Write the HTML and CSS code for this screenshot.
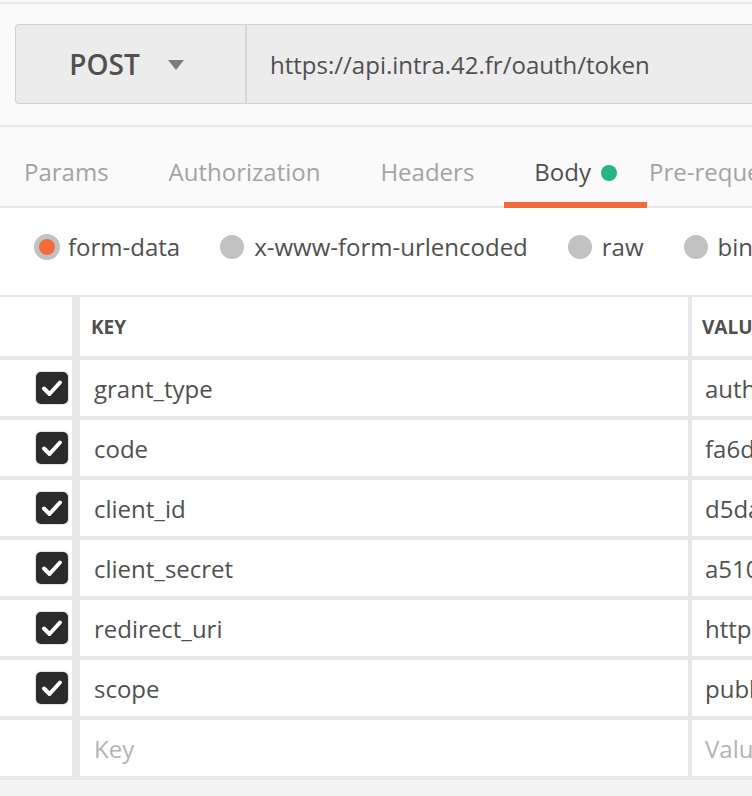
FILE: index.html
```html
<html>
<head>
    <title>Body - form-data</title>
    <link rel="stylesheet" href="styles.css">
</head>
<body>
    <div class="request">
        <div class="request-bar">
            <div class="method">
                <span>POST</span>
                <svg class="caret" width="16" height="10" viewBox="0 0 16 10"><path d="M0 0 H16 L8 10 Z" fill="#7d7d7d"/></svg>
            </div>
            <div class="url">https://api.intra.42.fr/oauth/token</div>
        </div>
    </div>

    <div class="tabs">
        <div class="tab first">Params</div>
        <div class="tab">Authorization</div>
        <div class="tab">Headers</div>
        <div class="tab active">Body <span class="dot"></span></div>
        <div class="tab last">Pre-request Script</div>
    </div>

    <div class="body-types">
        <label class="radio checked"><span class="circle"></span>form-data</label>
        <label class="radio"><span class="circle"></span>x-www-form-urlencoded</label>
        <label class="radio"><span class="circle"></span>raw</label>
        <label class="radio"><span class="circle"></span>binary</label>
    </div>

    <div class="table">
        <div class="row head">
            <div class="cell check"></div>
            <div class="cell key">KEY</div>
            <div class="cell value">VALUE</div>
        </div>
        <div class="row">
            <div class="cell check"><span class="box"><svg width="28" height="28" viewBox="0 0 28 28"><path d="M6 14.5 L11.5 20 L22 8.5" fill="none" stroke="#fff" stroke-width="4" stroke-linecap="round" stroke-linejoin="round"/></svg></span></div>
            <div class="cell key">grant_type</div>
            <div class="cell value">authorization_code</div>
        </div>
        <div class="row">
            <div class="cell check"><span class="box"><svg width="28" height="28" viewBox="0 0 28 28"><path d="M6 14.5 L11.5 20 L22 8.5" fill="none" stroke="#fff" stroke-width="4" stroke-linecap="round" stroke-linejoin="round"/></svg></span></div>
            <div class="cell key">code</div>
            <div class="cell value">fa6d</div>
        </div>
        <div class="row">
            <div class="cell check"><span class="box"><svg width="28" height="28" viewBox="0 0 28 28"><path d="M6 14.5 L11.5 20 L22 8.5" fill="none" stroke="#fff" stroke-width="4" stroke-linecap="round" stroke-linejoin="round"/></svg></span></div>
            <div class="cell key">client_id</div>
            <div class="cell value">d5da</div>
        </div>
        <div class="row">
            <div class="cell check"><span class="box"><svg width="28" height="28" viewBox="0 0 28 28"><path d="M6 14.5 L11.5 20 L22 8.5" fill="none" stroke="#fff" stroke-width="4" stroke-linecap="round" stroke-linejoin="round"/></svg></span></div>
            <div class="cell key">client_secret</div>
            <div class="cell value">a510</div>
        </div>
        <div class="row">
            <div class="cell check"><span class="box"><svg width="28" height="28" viewBox="0 0 28 28"><path d="M6 14.5 L11.5 20 L22 8.5" fill="none" stroke="#fff" stroke-width="4" stroke-linecap="round" stroke-linejoin="round"/></svg></span></div>
            <div class="cell key">redirect_uri</div>
            <div class="cell value">http</div>
        </div>
        <div class="row">
            <div class="cell check"><span class="box"><svg width="28" height="28" viewBox="0 0 28 28"><path d="M6 14.5 L11.5 20 L22 8.5" fill="none" stroke="#fff" stroke-width="4" stroke-linecap="round" stroke-linejoin="round"/></svg></span></div>
            <div class="cell key">scope</div>
            <div class="cell value">public</div>
        </div>
        <div class="row">
            <div class="cell check"></div>
            <div class="cell key placeholder">Key</div>
            <div class="cell value placeholder">Value</div>
        </div>
    </div>
    <div class="footer"></div>
</body>
</html>
```

FILE: styles.css
```css
body {
    margin: 0;
    padding-top: 2px;
    background-color: #fafafa;
    font-family: "Open Sans", "Noto Sans", sans-serif;
    color: #505050;
    overflow: hidden;
    width: 752px;
    height: 796px;
}
.request {
    border-top: 2px solid #e8e8e8;
    border-bottom: 2px solid #e8e8e8;
    padding: 20px 0 21px 15px;
}
.request-bar {
    display: flex;
    height: 78px;
    background: #ececec;
    border: 1px solid #d2d2d2;
    border-right: none;
    border-radius: 4px 0 0 4px;
}
.method {
    width: 231px;
    flex-shrink: 0;
    display: flex;
    align-items: center;
    justify-content: center;
    gap: 28px;
    border-right: 2px solid #d6d6d6;
    font-size: 28px;
    font-weight: 600;
    padding-right: 8px;
    box-sizing: border-box;
}
.caret {
    margin-top: 2px;
}
.url {
    display: flex;
    align-items: center;
    padding-left: 23px;
    font-size: 24px;
    white-space: nowrap;
}
.tabs {
    display: flex;
    height: 79px;
    border-bottom: 2px solid #e8e8e8;
    white-space: nowrap;
    font-size: 24px;
}
.tab {
    display: flex;
    align-items: center;
    padding: 14px 30px 0 30px;
    color: #a3a3a3;
    border-bottom: 6px solid transparent;
    margin-bottom: -2px;
}
.tab.first {
    padding-left: 24px;
}
.tab.last {
    padding-left: 2px;
}
.tab.active {
    color: #505050;
    border-bottom-color: #f26b3a;
}
.dot {
    display: inline-block;
    width: 16px;
    height: 16px;
    border-radius: 50%;
    background: #26b47f;
    margin-left: 10px;
    margin-top: 2px;
}
.body-types {
    display: flex;
    align-items: center;
    height: 77px;
    padding: 0 0 10px 34px;
    background: #fff;
    font-size: 24px;
    white-space: nowrap;
}
.radio {
    display: flex;
    align-items: center;
    margin-right: 40px;
}
.circle {
    width: 24px;
    height: 24px;
    border-radius: 50%;
    background: #c2c2c2;
    margin-right: 10px;
    box-sizing: border-box;
}
.radio.checked .circle {
    width: 26px;
    height: 26px;
    background: #f26b3a;
    border: 5px solid #c2c2c2;
    margin-right: 8px;
}
.table {
    background: #fff;
    border-top: 2px solid #e8e8e8;
}
.row {
    display: flex;
    height: 56px;
    border-bottom: 4px solid #e8e8e8;
    font-size: 24px;
}
.row.head {
    height: 59px;
    font-size: 19px;
    font-weight: 700;
}
.cell {
    display: flex;
    align-items: center;
    white-space: nowrap;
    overflow: hidden;
}
.check {
    width: 80px;
    flex-shrink: 0;
    justify-content: flex-end;
    padding-right: 4px;
    box-sizing: border-box;
    border-right: 8px solid #e8e8e8;
}
.key {
    width: 612px;
    flex-shrink: 0;
    padding-left: 14px;
    box-sizing: border-box;
    border-right: 4px solid #e8e8e8;
}
.head .key {
    padding-left: 11px;
}
.value {
    padding-left: 13px;
}
.head .value {
    padding-left: 10px;
}
.placeholder {
    color: #b3b3b3;
}
.box {
    display: flex;
    align-items: center;
    justify-content: center;
    width: 32px;
    height: 32px;
    background: #2b2b2b;
    border-radius: 5px;
    box-shadow: 0 0 0 1px #e2e2e2;
}
.footer {
    height: 20px;
    background: #f4f4f4;
}
```
